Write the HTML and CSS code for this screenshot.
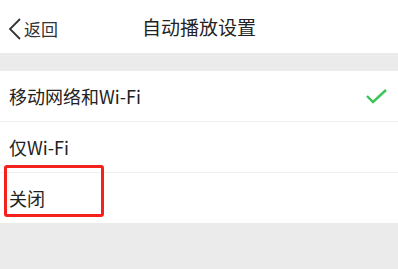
FILE: index.html
```html
<!DOCTYPE html>
<html>
<head>
    <title>自动播放设置</title>
    <link rel="stylesheet" href="styles.css">
</head>
<body>
    <div class="header">
        <div class="back">
            <svg class="back-icon" width="15" height="22" viewBox="0 0 15 22">
                <polyline points="12,1 2,11 12,21" fill="none" stroke="#333" stroke-width="1.8"/>
            </svg>
            <span>返回</span>
        </div>
        <div class="title">自动播放设置</div>
    </div>
    <div class="gap"></div>
    <ul class="options">
        <li class="option">
            <span>移动网络和Wi-Fi</span>
            <svg class="check" width="22" height="16" viewBox="0 0 22 16">
                <polyline points="1,8 7,14 20,2" fill="none" stroke="#3cc45a" stroke-width="2.4"/>
            </svg>
        </li>
        <li class="option"><span>仅Wi-Fi</span></li>
        <li class="option last">
            <span>关闭</span>
            <div class="mark"></div>
        </li>
    </ul>
</body>
</html>
```

FILE: styles.css
```css
body {
    margin: 0;
    padding: 0;
    background-color: #ebebeb;
    font-family: "Noto Sans CJK SC", "Noto Sans", sans-serif;
    color: #222;
}

.header {
    position: relative;
    height: 53px;
    background-color: #fff;
    display: flex;
    align-items: center;
    justify-content: center;
}

.back {
    position: absolute;
    left: 8px;
    top: 16px;
    display: flex;
    align-items: center;
    font-size: 17px;
    color: #333;
}

.back-icon {
    margin-right: 1px;
}

.title {
    font-size: 19px;
    color: #222;
}

.gap {
    height: 18px;
}

.options {
    list-style-type: none;
    margin: 0;
    padding: 0;
    background-color: #fff;
}

.option {
    position: relative;
    height: 50px;
    display: flex;
    align-items: center;
    justify-content: space-between;
    padding: 0 10px 0 9px;
    font-size: 18px;
    border-bottom: 1px solid #efefef;
}

.option.last {
    border-bottom: none;
}

.mark {
    position: absolute;
    left: 4px;
    top: -8px;
    width: 94px;
    height: 46px;
    border: 3px solid #f5211b;
    border-radius: 3px;
}
```
